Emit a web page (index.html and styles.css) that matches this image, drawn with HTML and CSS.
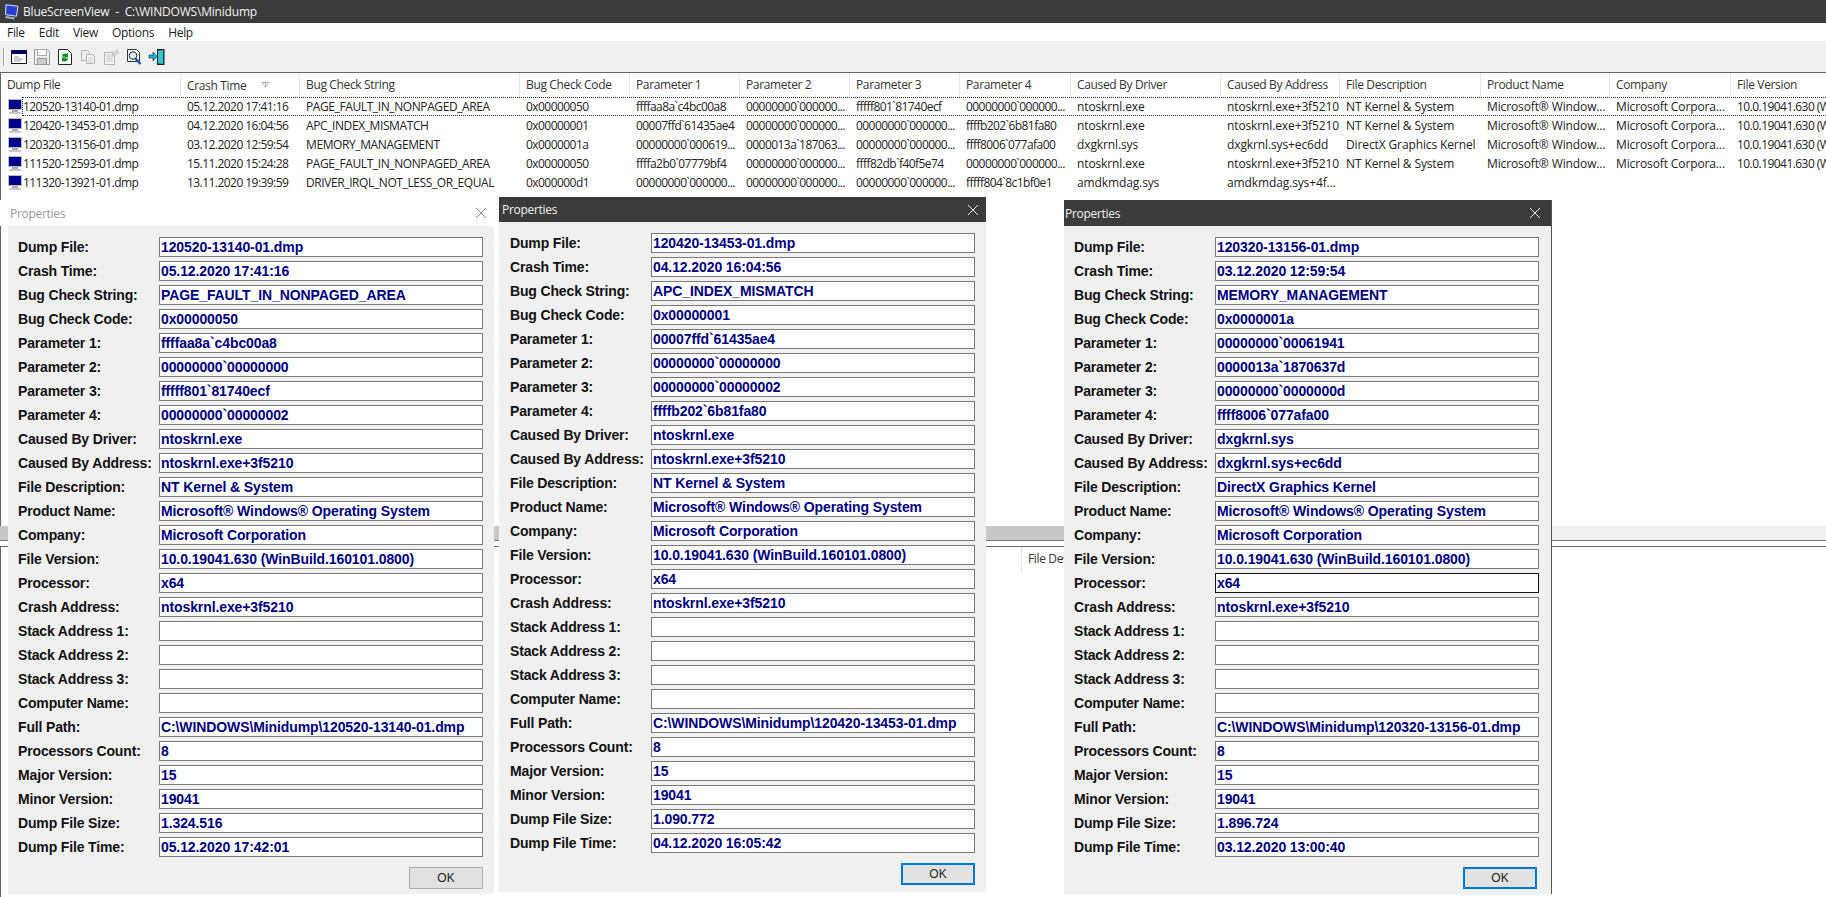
FILE: index.html
```html
<!DOCTYPE html>
<html lang="en">
<head>
<meta charset="utf-8">
<title>BlueScreenView</title>
<link rel="stylesheet" href="styles.css">
</head>
<body>
<svg class="defs" width="0" height="0" aria-hidden="true">
  <defs>
    <symbol id="pc" viewBox="0 0 16 16">
      <rect x="1" y="0" width="14" height="11" fill="#b9b9c4"/>
      <rect x="2" y="1" width="12" height="9" fill="#00008b"/>
      <rect x="5" y="11" width="6" height="2" fill="#a8a8a8"/>
      <rect x="2" y="13" width="12" height="2" fill="#c8c8c8"/>
    </symbol>
  </defs>
</svg>
<div class="app">
  <header class="titlebar">
    <svg class="appicon" viewBox="0 0 16 16"><path d="M3 .8l12 1.400-1.500 10-11-1.600z" fill="#2a3fd0" stroke="#d8dcf5"/><path d="M3 12l9 1.500-.5 2-9.500-1.500z" fill="#a4a9bd"/></svg>
    <span>BlueScreenView&nbsp; -&nbsp; C:\WINDOWS\Minidump</span>
  </header>
  <nav class="menu"><span>File</span><span>Edit</span><span>View</span><span>Options</span><span>Help</span></nav>
  <div class="toolbar">
    <i class="grip"></i>
    <svg class="tool t1" viewBox="0 0 16 16"><rect x=".5" y="1.500" width="15" height="13" fill="#fff" stroke="#111"/><rect x="1" y="2" width="14" height="3" fill="#000080"/><path d="M3 8h5M3 10h9M3 12h7" stroke="#999"/></svg>
    <svg class="tool t2" viewBox="0 0 16 16"><path d="M.5.5h13l2 2v13H.5z" fill="#eee" stroke="#999"/><rect x="3.500" y=".5" width="9" height="6" fill="#fff" stroke="#aaa"/><rect x="3.500" y="9.500" width="9" height="6" fill="#ccc" stroke="#999"/></svg>
    <svg class="tool t3" viewBox="0 0 16 16"><path d="M1.500.5h9l4 4v11h-13z" fill="#fff" stroke="#222"/><path d="M5 7a3.500 3.500 0 0 1 5-2l1-1v4.500H7l1-1a2 2 0 0 0-2 .5z" fill="#0a8f1f"/><path d="M11 10a3.500 3.500 0 0 1-5 2l-1 1V8.500h4l-1 1a2 2 0 0 0 2-.5z" fill="#0a8f1f"/></svg>
    <svg class="tool t4" viewBox="0 0 16 16"><path d="M1.500 1.500h6l2 2v8h-8z" fill="#eee" stroke="#b5b5b5"/><path d="M6.500 5.500h6l2 2v7h-8z" fill="#f5f5f5" stroke="#b5b5b5"/><path d="M8 9h5M8 11h5M8 13h5" stroke="#ccc"/></svg>
    <svg class="tool t5" viewBox="0 0 16 16"><path d="M1.500 3.500h10v12h-10z" fill="#f3f3f3" stroke="#b5b5b5"/><path d="M3 6h7M3 8h7M3 10h7M3 12h7" stroke="#c8c8c8"/><path d="M9 5l5-4 1.500 3-5 3z" fill="#ddd" stroke="#aaa" stroke-width=".7"/></svg>
    <svg class="tool t6" viewBox="0 0 16 16"><path d="M1.500.5h9l3 3v9h-12z" fill="#fff" stroke="#333"/><circle cx="7" cy="6.500" r="3.800" fill="#d8eefc" stroke="#222"/><path d="M9.500 9.500l5 5.500" stroke="#1e50b4" stroke-width="2.600"/></svg>
    <svg class="tool t7" viewBox="0 0 17 16"><rect x="9.500" y=".5" width="6.500" height="15" fill="#0a6a70" stroke="#123"/><path d="M10 2l5-1v14l-5-1z" fill="#36c6ce"/><path d="M1 6h4V3l4 4.500L5 12V9H1z" fill="#10b8e0" stroke="#123" stroke-width=".6"/></svg>
  </div>
  <section class="list upper">
    <div class="cols head">
      <span>Dump File</span><span class="sorted">Crash Time<svg class="sort" viewBox="0 0 9 6"><path d="M.5.5h8M4.500.5v5" stroke="#aaa" fill="none"/><path d="M1 .5l3.500 5 3.500-5" stroke="#bbb" fill="none"/></svg></span><span>Bug Check String</span><span>Bug Check Code</span><span>Parameter 1</span><span>Parameter 2</span><span>Parameter 3</span><span>Parameter 4</span><span>Caused By Driver</span><span>Caused By Address</span><span>File Description</span><span>Product Name</span><span>Company</span><span>File Version</span>
    </div>
    <div class="cols row focus">
      <span class="file"><svg class="pc"><use href="#pc"/></svg><b>120520-13140-01.dmp</b></span><span>05.12.2020 17:41:16</span><span>PAGE_FAULT_IN_NONPAGED_AREA</span><span>0x00000050</span><span>ffffaa8a`c4bc00a8</span><span>00000000`000000...</span><span>fffff801`81740ecf</span><span>00000000`000000...</span><span>ntoskrnl.exe</span><span>ntoskrnl.exe+3f5210</span><span>NT Kernel &amp; System</span><span>Microsoft® Window...</span><span>Microsoft Corpora...</span><span>10.0.19041.630 (WinBuild.160101.0800)</span>
    </div>
    <div class="cols row">
      <span class="file"><svg class="pc"><use href="#pc"/></svg><b>120420-13453-01.dmp</b></span><span>04.12.2020 16:04:56</span><span>APC_INDEX_MISMATCH</span><span>0x00000001</span><span>00007ffd`61435ae4</span><span>00000000`000000...</span><span>00000000`000000...</span><span>ffffb202`6b81fa80</span><span>ntoskrnl.exe</span><span>ntoskrnl.exe+3f5210</span><span>NT Kernel &amp; System</span><span>Microsoft® Window...</span><span>Microsoft Corpora...</span><span>10.0.19041.630 (WinBuild.160101.0800)</span>
    </div>
    <div class="cols row">
      <span class="file"><svg class="pc"><use href="#pc"/></svg><b>120320-13156-01.dmp</b></span><span>03.12.2020 12:59:54</span><span>MEMORY_MANAGEMENT</span><span>0x0000001a</span><span>00000000`000619...</span><span>0000013a`187063...</span><span>00000000`000000...</span><span>ffff8006`077afa00</span><span>dxgkrnl.sys</span><span>dxgkrnl.sys+ec6dd</span><span>DirectX Graphics Kernel</span><span>Microsoft® Window...</span><span>Microsoft Corpora...</span><span>10.0.19041.630 (WinBuild.160101.0800)</span>
    </div>
    <div class="cols row">
      <span class="file"><svg class="pc"><use href="#pc"/></svg><b>111520-12593-01.dmp</b></span><span>15.11.2020 15:24:28</span><span>PAGE_FAULT_IN_NONPAGED_AREA</span><span>0x00000050</span><span>ffffa2b0`07779bf4</span><span>00000000`000000...</span><span>ffff82db`f40f5e74</span><span>00000000`000000...</span><span>ntoskrnl.exe</span><span>ntoskrnl.exe+3f5210</span><span>NT Kernel &amp; System</span><span>Microsoft® Window...</span><span>Microsoft Corpora...</span><span>10.0.19041.630 (WinBuild.160101.0800)</span>
    </div>
    <div class="cols row">
      <span class="file"><svg class="pc"><use href="#pc"/></svg><b>111320-13921-01.dmp</b></span><span>13.11.2020 19:39:59</span><span>DRIVER_IRQL_NOT_LESS_OR_EQUAL</span><span>0x000000d1</span><span>00000000`000000...</span><span>00000000`000000...</span><span>00000000`000000...</span><span>fffff804`8c1bf0e1</span><span>amdkmdag.sys</span><span>amdkmdag.sys+4f...</span><span></span><span></span><span></span><span></span>
    </div>
  </section>
  <div class="splitter"><i class="ghost"></i></div>
  <section class="list lower">
    <div class="lowerhead"><span>File Description</span></div>
  </section>
</div>

<section class="dialog d1">
  <div class="dtitle"><span>Properties</span><svg class="x" viewBox="0 0 10 10"><path d="M0 0l10 10M10 0L0 10"/></svg></div>
  <div class="fields">
    <label>Dump File:</label><div class="v">120520-13140-01.dmp</div>
    <label>Crash Time:</label><div class="v">05.12.2020 17:41:16</div>
    <label>Bug Check String:</label><div class="v">PAGE_FAULT_IN_NONPAGED_AREA</div>
    <label>Bug Check Code:</label><div class="v">0x00000050</div>
    <label>Parameter 1:</label><div class="v">ffffaa8a`c4bc00a8</div>
    <label>Parameter 2:</label><div class="v">00000000`00000000</div>
    <label>Parameter 3:</label><div class="v">fffff801`81740ecf</div>
    <label>Parameter 4:</label><div class="v">00000000`00000002</div>
    <label>Caused By Driver:</label><div class="v">ntoskrnl.exe</div>
    <label>Caused By Address:</label><div class="v">ntoskrnl.exe+3f5210</div>
    <label>File Description:</label><div class="v">NT Kernel &amp; System</div>
    <label>Product Name:</label><div class="v">Microsoft® Windows® Operating System</div>
    <label>Company:</label><div class="v">Microsoft Corporation</div>
    <label>File Version:</label><div class="v">10.0.19041.630 (WinBuild.160101.0800)</div>
    <label>Processor:</label><div class="v">x64</div>
    <label>Crash Address:</label><div class="v">ntoskrnl.exe+3f5210</div>
    <label>Stack Address 1:</label><div class="v"></div>
    <label>Stack Address 2:</label><div class="v"></div>
    <label>Stack Address 3:</label><div class="v"></div>
    <label>Computer Name:</label><div class="v"></div>
    <label>Full Path:</label><div class="v">C:\WINDOWS\Minidump\120520-13140-01.dmp</div>
    <label>Processors Count:</label><div class="v">8</div>
    <label>Major Version:</label><div class="v">15</div>
    <label>Minor Version:</label><div class="v">19041</div>
    <label>Dump File Size:</label><div class="v">1.324.516</div>
    <label>Dump File Time:</label><div class="v">05.12.2020 17:42:01</div>
  </div>
  <div class="actions"><button class="ok">OK</button></div>
</section>

<section class="dialog d2">
  <div class="dtitle"><span>Properties</span><svg class="x" viewBox="0 0 10 10"><path d="M0 0l10 10M10 0L0 10"/></svg></div>
  <div class="fields">
    <label>Dump File:</label><div class="v">120420-13453-01.dmp</div>
    <label>Crash Time:</label><div class="v">04.12.2020 16:04:56</div>
    <label>Bug Check String:</label><div class="v">APC_INDEX_MISMATCH</div>
    <label>Bug Check Code:</label><div class="v">0x00000001</div>
    <label>Parameter 1:</label><div class="v">00007ffd`61435ae4</div>
    <label>Parameter 2:</label><div class="v">00000000`00000000</div>
    <label>Parameter 3:</label><div class="v">00000000`00000002</div>
    <label>Parameter 4:</label><div class="v">ffffb202`6b81fa80</div>
    <label>Caused By Driver:</label><div class="v">ntoskrnl.exe</div>
    <label>Caused By Address:</label><div class="v">ntoskrnl.exe+3f5210</div>
    <label>File Description:</label><div class="v">NT Kernel &amp; System</div>
    <label>Product Name:</label><div class="v">Microsoft® Windows® Operating System</div>
    <label>Company:</label><div class="v">Microsoft Corporation</div>
    <label>File Version:</label><div class="v">10.0.19041.630 (WinBuild.160101.0800)</div>
    <label>Processor:</label><div class="v">x64</div>
    <label>Crash Address:</label><div class="v">ntoskrnl.exe+3f5210</div>
    <label>Stack Address 1:</label><div class="v"></div>
    <label>Stack Address 2:</label><div class="v"></div>
    <label>Stack Address 3:</label><div class="v"></div>
    <label>Computer Name:</label><div class="v"></div>
    <label>Full Path:</label><div class="v">C:\WINDOWS\Minidump\120420-13453-01.dmp</div>
    <label>Processors Count:</label><div class="v">8</div>
    <label>Major Version:</label><div class="v">15</div>
    <label>Minor Version:</label><div class="v">19041</div>
    <label>Dump File Size:</label><div class="v">1.090.772</div>
    <label>Dump File Time:</label><div class="v">04.12.2020 16:05:42</div>
  </div>
  <div class="actions"><button class="ok default">OK</button></div>
</section>

<section class="dialog d3">
  <div class="dtitle"><span>Properties</span><svg class="x" viewBox="0 0 10 10"><path d="M0 0l10 10M10 0L0 10"/></svg></div>
  <div class="fields">
    <label>Dump File:</label><div class="v">120320-13156-01.dmp</div>
    <label>Crash Time:</label><div class="v">03.12.2020 12:59:54</div>
    <label>Bug Check String:</label><div class="v">MEMORY_MANAGEMENT</div>
    <label>Bug Check Code:</label><div class="v">0x0000001a</div>
    <label>Parameter 1:</label><div class="v">00000000`00061941</div>
    <label>Parameter 2:</label><div class="v">0000013a`1870637d</div>
    <label>Parameter 3:</label><div class="v">00000000`0000000d</div>
    <label>Parameter 4:</label><div class="v">ffff8006`077afa00</div>
    <label>Caused By Driver:</label><div class="v">dxgkrnl.sys</div>
    <label>Caused By Address:</label><div class="v">dxgkrnl.sys+ec6dd</div>
    <label>File Description:</label><div class="v">DirectX Graphics Kernel</div>
    <label>Product Name:</label><div class="v">Microsoft® Windows® Operating System</div>
    <label>Company:</label><div class="v">Microsoft Corporation</div>
    <label>File Version:</label><div class="v">10.0.19041.630 (WinBuild.160101.0800)</div>
    <label>Processor:</label><div class="v active">x64</div>
    <label>Crash Address:</label><div class="v">ntoskrnl.exe+3f5210</div>
    <label>Stack Address 1:</label><div class="v"></div>
    <label>Stack Address 2:</label><div class="v"></div>
    <label>Stack Address 3:</label><div class="v"></div>
    <label>Computer Name:</label><div class="v"></div>
    <label>Full Path:</label><div class="v">C:\WINDOWS\Minidump\120320-13156-01.dmp</div>
    <label>Processors Count:</label><div class="v">8</div>
    <label>Major Version:</label><div class="v">15</div>
    <label>Minor Version:</label><div class="v">19041</div>
    <label>Dump File Size:</label><div class="v">1.896.724</div>
    <label>Dump File Time:</label><div class="v">03.12.2020 13:00:40</div>
  </div>
  <div class="actions"><button class="ok default">OK</button></div>
</section>
</body>
</html>
```

FILE: styles.css
```css
* { box-sizing: border-box; }
html, body { margin: 0; padding: 0; height: 100%; overflow: hidden; background: #fff; }
body { font: 12px "Open Sans", "Liberation Sans", sans-serif; color: #1c1c1c; position: relative; }
.defs { position: absolute; }
.app { display: flex; flex-direction: column; height: 897px; }

.titlebar { height: 23px; flex: none; background: #3b3b3b; color: #f2f2f2; display: flex; align-items: center; padding-left: 3px; letter-spacing: -.2px; }
.appicon { width: 16px; height: 16px; margin-right: 4px; }

.menu { height: 18px; flex: none; background: #fff; display: flex; gap: 14px; padding: 1px 0 0 7px; line-height: 17px; letter-spacing: -.3px; }

.toolbar { height: 31px; flex: none; background: #f0f0f0; display: flex; align-items: center; padding: 0 0 0 3px; }
.grip { width: 2px; height: 18px; border-left: 1px solid #a0a0a0; border-right: 1px solid #fff; margin-right: 6px; }
.tool { height: 16px; width: 16px; flex: none; margin-right: 7px; }
.tool.t7 { width: 17px; margin-left: -1px; }

.list { background: #fff; border-top: 1px solid #666; border-left: 1px solid #666; }
.upper { height: 454px; flex: none; overflow: hidden; }
.cols { display: grid; grid-template-columns: 180px 119px 220px 110px 110px 110px 110px 111px 150px 119px 141px 129px 121px 200px; white-space: nowrap; }
.cols > span { padding-left: 6px; overflow: hidden; }
.head { height: 24px; line-height: 23px; color: #333; letter-spacing: -.35px; }
.head > span { border-right: 1px solid #e5e5e5; }
.head > span:last-child { border-right: 0; }
.sorted { display: flex; align-items: center; }
.sort { width: 9px; height: 6px; margin-left: 15px; }
.row { height: 19px; line-height: 20px; color: #222; letter-spacing: -.55px; }
.row > span:nth-child(3) { letter-spacing: -.4px; }
.row > span:nth-child(n+9):nth-child(-n+13) { letter-spacing: -.12px; }
.row > span.file { padding-left: 6px; display: flex; align-items: center; }
.pc { width: 16px; height: 16px; flex: none; }
.file b { font-weight: normal; }
.focus { position: relative; }
.focus::after { content: ""; position: absolute; left: 21px; right: 0; top: 0; bottom: 0; border: 1px dotted #333; border-right: 0; pointer-events: none; }

.splitter { height: 15px; flex: none; background: #f0f0f0; border-bottom: 1px solid #777; display: flex; }
.ghost { width: 1064px; background: #c8c8c8; display: block; }
.lower { flex: 1; margin-top: 5px; }
.lowerhead { height: 25px; line-height: 24px; padding-left: 6px; margin-left: 1020px; border-left: 1px solid #e5e5e5; color: #333; letter-spacing: -.35px; }

.dialog { position: absolute; background: #f0f0f0; }
.d1 { left: 8px; top: 200px; width: 486px; padding-bottom: 5px; }
.d2 { left: 499px; top: 197px; width: 487px; padding-bottom: 7px; }
.d3 { left: 1064px; top: 200px; width: 488px; padding-bottom: 5px; border-right: 1px solid #555; }
.dtitle { height: 26px; background: #3b3b3b; color: #f0f0f0; display: flex; align-items: center; justify-content: space-between; padding: 0 8px 0 1px; letter-spacing: -.3px; }
.d1 .dtitle { background: #fff; color: #9a9a9a; margin-left: -8px; padding-left: 10px; }
.d2 .dtitle { height: 25px; padding-left: 3px; }
.d3 .dtitle { padding-right: 11px; }
.x { width: 10px; height: 10px; stroke: #eee; fill: none; stroke-width: 1; }
.d1 .x { stroke: #888; }

.fields { display: grid; grid-template-columns: 141px 324px; grid-auto-rows: 20px; row-gap: 4px; padding: 11px 0 0 10px; }
.d2 .fields { padding-left: 11px; }
.fields label { font: bold 14px/20px "Liberation Sans", sans-serif; letter-spacing: -.15px; color: #111; white-space: nowrap; }
.v { height: 20px; background: #fff; border: 1px solid #7a7a7a; padding-left: 1px; font: bold 14px/18px "Liberation Sans", sans-serif; letter-spacing: -.1px; color: #000080; white-space: nowrap; overflow: hidden; }
.v.active { border-color: #111; }

.actions { display: flex; justify-content: flex-end; padding: 10px 11px 0 0; }
.d3 .actions { padding-right: 14px; }
.ok { width: 74px; height: 22px; padding: 0; border: 1px solid #adadad; background: #e1e1e1; color: #222; font: 12px "Liberation Sans", sans-serif; }
.ok.default { border: 2px solid #0078d7; }
```
